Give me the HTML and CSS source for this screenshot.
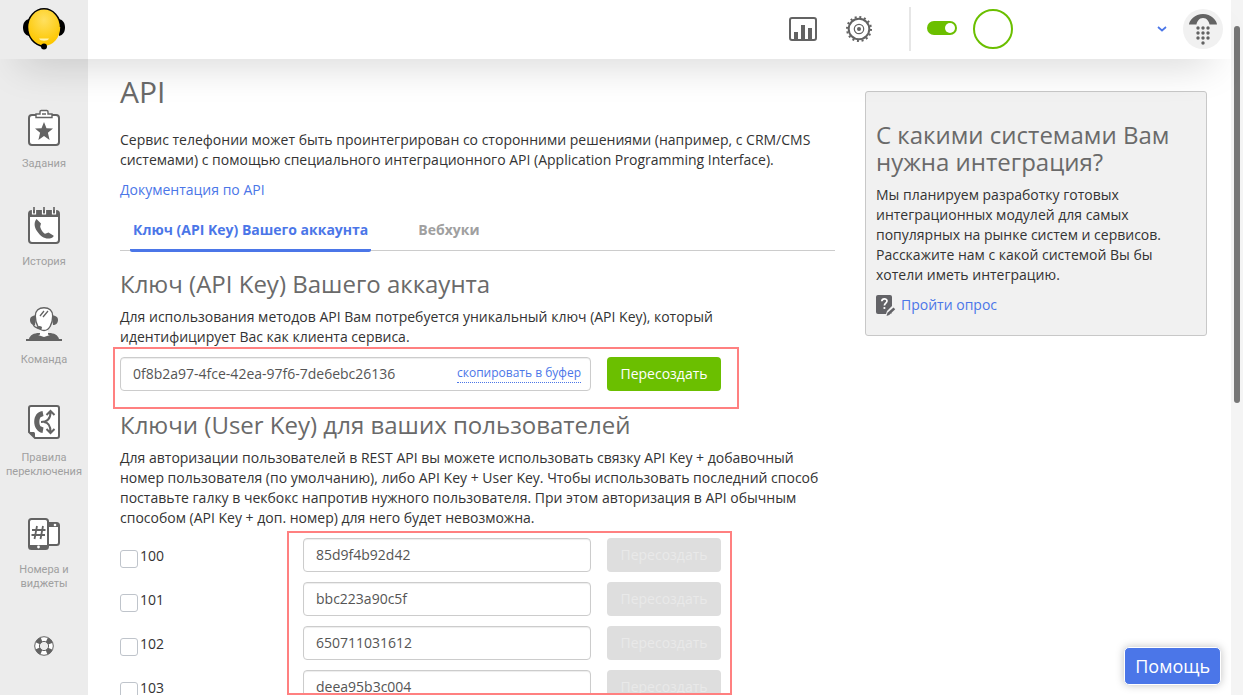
FILE: index.html
```html
<!DOCTYPE html>
<html lang="ru">
<head>
<meta charset="utf-8">
<title>API</title>
<link rel="stylesheet" href="styles.css">
</head>
<body>
<div class="app">
  <header class="topbar">
    <a class="logo" href="#" aria-label="Главная">
      <svg width="44" height="44" viewBox="0 0 44 44">
        <defs><radialGradient id="face" cx=".5" cy=".3" r=".65"><stop offset="0" stop-color="#ffe060"/><stop offset="1" stop-color="#fdc700"/></radialGradient></defs>
        <path d="M7 12C3 13 1 16 1 20.500s2 7.500 6 8.500zM37 12c4 1 6 4 6 8.500s-2 7.500-6 8.500z" fill="#000"/>
        <ellipse cx="22" cy="20.500" rx="16.200" ry="18.500" fill="url(#face)"/>
        <path d="M22 39.500C12 38 5.500 30 5.500 20C5.500 10 13 1.800 22 1.800s16.500 8.200 16.500 18.200" fill="none" stroke="#000" stroke-width="1.500"/>
        <path d="M17 31.500h10c-1 3-9 3-10 0z" fill="#fff3b0"/>
        <circle cx="22" cy="39.500" r="3" fill="#000"/>
      </svg>
    </a>
    <nav class="tools">
      <a class="tool" href="#" aria-label="Статистика">
        <svg width="28" height="24" viewBox="0 0 28 24"><rect x="1" y="1" width="26" height="22" rx="2" fill="#fff" stroke="#636363" stroke-width="2"/><path d="M5 22v-7h4v7zM12 22V8h4v14zM19 22V11h4v11z" fill="#636363"/></svg>
      </a>
      <a class="tool" href="#" aria-label="Настройки">
        <svg width="28" height="28" viewBox="0 0 28 28" fill="none" stroke="#636363"><circle cx="14" cy="14" r="12" stroke-width="2" stroke-dasharray="2 2.712"/><circle cx="14" cy="14" r="10.300" stroke-width="2"/><circle cx="14" cy="14" r="4.700" stroke-width="1.200"/><circle cx="14" cy="14" r="2" fill="#636363" stroke="none"/></svg>
      </a>
      <span class="divider"></span>
      <input class="switch" type="checkbox" role="switch" checked aria-label="Статус">
      <span class="avatar"></span>
      <button class="more" type="button" aria-label="Меню"><svg width="10" height="6" viewBox="0 0 10 6"><path d="M1 1l4 3.500L9 1" fill="none" stroke="#4b76e8" stroke-width="1.700"/></svg></button>
      <button class="dial" type="button" aria-label="Телефон">
        <svg width="32" height="32" viewBox="0 0 32 32" fill="#636363"><path d="M2 11.500C2 7.500 8 1 16 1S30 7.500 30 11.500H22.500C22 8.500 20 5 16 5S10 8.500 9.500 11.500z"/><circle cx="11" cy="15" r="1.700"/><circle cx="16" cy="15" r="1.700"/><circle cx="21" cy="15" r="1.700"/><circle cx="11" cy="20" r="1.700"/><circle cx="16" cy="20" r="1.700"/><circle cx="21" cy="20" r="1.700"/><circle cx="11" cy="25" r="1.700"/><circle cx="16" cy="25" r="1.700"/><circle cx="21" cy="25" r="1.700"/><circle cx="16" cy="30" r="1.700"/></svg>
      </button>
    </nav>
  </header>
  <div class="body">
    <nav class="side">
      <a class="side-item" href="#">
        <svg width="40" height="40" viewBox="0 0 40 40"><rect x="5" y="7" width="30" height="30" rx="3" fill="#fff" stroke="#636363" stroke-width="2"/><path d="M12 9.500V6h4V3.800c0-.8.500-1.300 1.300-1.300h5.400c.8 0 1.300.5 1.300 1.300V6h4v3.500z" fill="#fff" stroke="#636363" stroke-width="1.400"/><path d="M18 6h4" stroke="#636363" stroke-width="1.500"/><path d="M20 14l2.500 6.300 6.500.3-5.100 4.200L25.600 32 20 28 14.400 32l1.700-7.200L11 20.600l6.500-.3z" fill="#636363"/></svg>
        <span>Задания</span>
      </a>
      <a class="side-item" href="#">
        <svg width="40" height="40" viewBox="0 0 40 40"><rect x="5" y="5" width="30" height="32" rx="3" fill="#fff" stroke="#636363" stroke-width="2"/><path d="M5 5h30v6H5z" fill="#636363"/><path d="M8.500 4v4h3V4M18.500 4v4h3V4M28.500 4v4h3V4" fill="none" stroke="#fff" stroke-width="1.200"/><path d="M10 1v6M20 1v6M30 1v6" stroke="#636363" stroke-width="1.600"/><path d="M12.500 13c-2.500 3-2.700 8 .8 12.500C17 31 22 34 27.500 32c1.300-.6 2.200-1.400 2.200-2.200L24.500 26.500l-3.300 1.300c-2-.8-4.500-4.200-5-7.300L17 17.500z" fill="#636363"/></svg>
        <span>История</span>
      </a>
      <a class="side-item" href="#">
        <svg width="40" height="40" viewBox="0 0 40 40"><path d="M2 37v-2h3c1-4 5-6 10-6h10c5 0 9 2 10 6h3v2z" fill="#636363"/><path d="M16 25v5c0 1-1 1-2 1l6 2 6-2c-1 0-2 0-2-1v-5z" fill="#fff"/><path d="M12 11c-4 1-6 2-6 5s2 5 5 5zM28 11c4 1 6 2 6 5s-2 5-5 5z" fill="#636363"/><path d="M20 3.700c5 0 8.700 3 8.700 8.300C28.700 20 25 26.500 20 26.500S11.300 20 11.300 12c0-5.300 3.700-8.300 8.700-8.300z" fill="#fff" stroke="#636363" stroke-width="1.400"/><path d="M16 12l4-5M19 13l5-6M9 20c1 3 3 4 6 4" fill="none" stroke="#636363" stroke-width="1.300"/><ellipse cx="15.500" cy="23.800" rx="2.600" ry="1.700" fill="#636363"/></svg>
        <span>Команда</span>
      </a>
      <a class="side-item" href="#">
        <svg width="40" height="40" viewBox="0 0 40 40"><path d="M7 4h26c1.300 0 2 .7 2 2v28c0 1.300-.7 2-2 2H11l-6-6V6c0-1.300.7-2 2-2z" fill="#fff" stroke="#636363" stroke-width="2"/><path d="M5 30h4c1.500 0 2 .5 2 2v4z" fill="#636363"/><path d="M18.500 9C7.500 10 7.500 29 18.500 31l1-5.500-3-1.200c-1.500-2-1.500-7 0-9L19.500 14z" fill="#636363"/><path d="M17 20c6 0 9.500-3 9.500-10M20 20c4 .5 6.500 4 6.500 10M22.500 13l4-4 4 4M22.500 27l4 4 4-4" fill="none" stroke="#636363" stroke-width="2"/></svg>
        <span>Правила переключения</span>
      </a>
      <a class="side-item" href="#">
        <svg width="40" height="40" viewBox="0 0 40 40"><rect x="20" y="9" width="15" height="22" rx="2.500" fill="#fff" stroke="#636363" stroke-width="2"/><path d="M24 9h11v4H24z" fill="#636363"/><circle cx="31" cy="11" r="1.300" fill="#fff"/><rect x="5" y="5" width="19" height="30" rx="2.500" fill="#fff" stroke="#636363" stroke-width="2"/><path d="M5 31h19v4H5z" fill="#636363"/><circle cx="14.500" cy="33" r="1.400" fill="#fff"/><path d="M13 12l-2.500 13M19 12l-2.500 13M8 16h13.500M7.500 21H21" stroke="#636363" stroke-width="1.800"/></svg>
        <span>Номера и виджеты</span>
      </a>
      <a class="side-item" href="#" aria-label="Поддержка">
        <svg width="40" height="40" viewBox="0 0 40 40" fill="none"><circle cx="20" cy="20" r="6.900" stroke="#fff" stroke-width="5"/><circle cx="20" cy="20" r="6.900" stroke="#636363" stroke-width="5" stroke-dasharray="5.400 5.440" stroke-dashoffset="-2.720"/><circle cx="20" cy="20" r="9.300" stroke="#636363"/><circle cx="20" cy="20" r="4.600" stroke="#636363"/></svg>
      </a>
    </nav>
    <main class="main">
      <section class="content">
        <h1>API</h1>
        <p>Сервис телефонии может быть проинтегрирован со сторонними решениями (например, с CRM/CMS системами) с помощью специального интеграционного API (Application Programming Interface).</p>
        <p><a class="link" href="#">Документация по API</a></p>
        <nav class="tabs">
          <a class="tab active" href="#">Ключ (API Key) Вашего аккаунта</a>
          <a class="tab" href="#">Вебхуки</a>
        </nav>
        <h2>Ключ (API Key) Вашего аккаунта</h2>
        <p>Для использования методов API Вам потребуется уникальный ключ (API Key), который<br>идентифицирует Вас как клиента сервиса.</p>
        <div class="row marked mark-key">
          <div class="field">
            <input class="text" type="text" value="0f8b2a97-4fce-42ea-97f6-7de6ebc26136" aria-label="API Key">
            <a class="copy" href="#">скопировать в буфер</a>
          </div>
          <button class="btn" type="button">Пересоздать</button>
        </div>
        <h2 class="users-title">Ключи (User Key) для ваших пользователей</h2>
        <p>Для авторизации пользователей в REST API вы можете использовать связку API Key + добавочный номер пользователя (по умолчанию), либо API Key + User Key. Чтобы использовать последний способ поставьте галку в чекбокс напротив нужного пользователя. При этом авторизация в API обычным способом (API Key + доп. номер) для него будет невозможна.</p>
        <div class="users marked mark-users">
          <div class="row"><label class="check"><input type="checkbox"><span>100</span></label><input class="text" type="text" value="85d9f4b92d42" aria-label="User Key 100"><button class="btn" type="button" disabled>Пересоздать</button></div>
          <div class="row"><label class="check"><input type="checkbox"><span>101</span></label><input class="text" type="text" value="bbc223a90c5f" aria-label="User Key 101"><button class="btn" type="button" disabled>Пересоздать</button></div>
          <div class="row"><label class="check"><input type="checkbox"><span>102</span></label><input class="text" type="text" value="650711031612" aria-label="User Key 102"><button class="btn" type="button" disabled>Пересоздать</button></div>
          <div class="row"><label class="check"><input type="checkbox"><span>103</span></label><input class="text" type="text" value="deea95b3c004" aria-label="User Key 103"><button class="btn" type="button" disabled>Пересоздать</button></div>
        </div>
      </section>
      <aside class="survey">
        <h2>С какими системами Вам нужна интеграция?</h2>
        <p>Мы планируем разработку готовых интеграционных модулей для самых популярных на рынке систем и сервисов. Расскажите нам с какой системой Вы бы хотели иметь интеграцию.</p>
        <a class="link survey-link" href="#">
          <svg width="20" height="22" viewBox="0 0 20 22"><rect width="16" height="19" rx="2" fill="#636367"/><path d="M5.800 6.200C6 3.200 11 3.200 11 6c0 2-2.600 2.300-2.600 4.500" fill="none" stroke="#fff" stroke-width="1.700"/><circle cx="8.400" cy="13" r="1.100" fill="#fff"/><path d="M9 22l2-6 5.500-5.500L20 13l-6 6.500z" fill="#f1f1f1"/><path d="M10.500 21l1-3.200 6-5.300 1.700 1.700-6 5.800z" fill="#636367"/></svg>
          <span>Пройти опрос</span>
        </a>
      </aside>
    </main>
  </div>
  <button class="help" type="button">Помощь</button>
</div>
<div class="scroll"><div class="thumb"></div></div>
</body>
</html>
```

FILE: styles.css
```css
* { box-sizing: border-box; }

body {
  margin: 0;
  height: 100vh;
  display: flex;
  overflow: hidden;
  background: #fff;
  color: #333;
  font: 14px/20px "Open Sans", "Noto Sans", sans-serif;
}

a { color: inherit; text-decoration: none; }
button, input { font: inherit; margin: 0; }
button { border: 0; padding: 0; background: none; }
svg { display: block; flex: none; }

.app {
  flex: 1;
  min-width: 0;
  display: flex;
  flex-direction: column;
  position: relative;
}

/* Top bar */
.topbar {
  flex: none;
  height: 59px;
  display: flex;
  background: #fff;
  position: relative;
  z-index: 1;
  box-shadow: 0 20px 40px -20px rgba(0, 0, 0, .28);
}
.logo {
  width: 88px;
  background: #ececec;
  display: flex;
  justify-content: center;
  padding-top: 7px;
}
.tools {
  flex: 1;
  display: flex;
  align-items: center;
  justify-content: flex-end;
  padding: 0 8px 1px 0;
}
.tool { margin-right: 28px; }
.divider { width: 2px; height: 44px; margin: 0 16px 0 8px; background: #e6e6e6; }
.switch {
  appearance: none;
  width: 30px;
  height: 14px;
  margin-right: 16px;
  margin-bottom: 2px;
  border-radius: 7px;
  background: #6bbf00;
  display: flex;
  align-items: center;
  justify-content: flex-end;
  padding-right: 2px;
}
.switch::before {
  content: "";
  width: 10px;
  height: 10px;
  border-radius: 50%;
  background: #fff;
}
.avatar {
  width: 40px;
  height: 40px;
  border: 2px solid #6bbf00;
  border-radius: 50%;
}
.more { margin: 0 16px 0 144px; }
.dial {
  width: 40px;
  height: 40px;
  border-radius: 50%;
  background: #f1f1f1;
  display: flex;
  align-items: center;
  justify-content: center;
}

/* Sidebar */
.body { flex: 1; min-height: 0; display: flex; overflow: hidden; }
.side {
  flex: none;
  width: 88px;
  background: #ececec;
  padding-top: 49px;
  display: flex;
  flex-direction: column;
  gap: 35px;
}
.side-item {
  display: flex;
  flex-direction: column;
  align-items: center;
  gap: 9px;
  padding: 0 4px;
  color: #a0a0a0;
  font: 11px/14px Roboto, sans-serif;
  text-align: center;
}

/* Page */
.main {
  flex: 1;
  min-width: 0;
  display: grid;
  grid-template-columns: minmax(0, 1fr) 342px;
  gap: 30px;
  align-items: start;
  padding: 0 24px 0 32px;
}
h1, h2 {
  margin: 0;
  color: #6a6a6a;
  font-weight: 400;
}
h1 { padding-top: 16px; font-size: 30px; line-height: 33px; margin-bottom: 22px; }
h2 { font-size: 24px; line-height: 27px; margin-bottom: 10px; }
p { margin: 0 0 10px; }
.link { color: #4b76e8; }

.tabs {
  display: flex;
  gap: 34px;
  padding: 0 10px;
  margin-bottom: 19px;
  border-bottom: 1px solid #ccc;
}
.tab {
  padding: 10px 3px 9px;
  margin-bottom: -2px;
  border-bottom: 3px solid transparent;
  border-radius: 2px;
  color: #a0a0a0;
  font-weight: 700;
}
.tab + .tab { margin-left: 10px; }
.tab.active { color: #4b76e8; border-color: #4b76e8; }

.row { display: flex; gap: 16px; margin-right: 114px; }
.field { flex: 1; position: relative; }
.text {
  width: 100%;
  height: 34px;
  padding: 5px 12px 7px;
  border: 1px solid #ccc;
  border-radius: 4px;
  background: #fff;
  box-shadow: inset 0 1px 1px rgba(0, 0, 0, .075);
  color: #555;
}
.copy {
  position: absolute;
  top: 7px;
  right: 10px;
  border-bottom: 1px dotted #4b76e8;
  color: #4b76e8;
  font-size: 12px;
  line-height: 18px;
}
.btn {
  flex: none;
  width: 114px;
  height: 34px;
  border-radius: 4px;
  background: #6bbf00;
  color: #fff;
}
.btn:disabled { background: #dedede; color: #e9e9e9; }

.users-title { margin-top: 20px; }
.users { display: flex; flex-direction: column; gap: 10px; }
.check { flex: none; width: 167px; display: flex; gap: 2px; padding-top: 8px; }
.check input {
  appearance: none;
  width: 18px;
  height: 18px;
  margin-top: 4px;
  border: 1px solid #bfc4cb;
  border-radius: 3px;
}
.users .text { flex: 1; min-width: 0; }

/* Highlight frames around the keys */
.marked { position: relative; }
.marked::after {
  content: "";
  position: absolute;
  border: 2px solid #ff8080;
  pointer-events: none;
}
.mark-key::after { inset: -10px -18px -18px -7px; }
.mark-users::after { inset: -7px 103px 9px 167px; }

.survey {
  margin-top: 32px;
  padding: 29px 10px 18px;
  border: 1px solid #c8c8c8;
  border-radius: 3px;
  background: #f1f1f1;
}
.survey-link { display: flex; gap: 5px; }

.help {
  position: absolute;
  right: 10px;
  bottom: 10px;
  height: 38px;
  padding: 0 10px;
  border: 1px solid #fff;
  border-radius: 5px;
  background: #4b76e8;
  box-shadow: 0 0 8px rgba(0, 0, 0, .25);
  color: #fff;
  font-size: 18px;
}

.scroll { flex: none; width: 12px; padding: 26px 3px 0; background: #f4f4f4; }
.thumb { height: 377px; border-radius: 3px; background: #777; }
```
